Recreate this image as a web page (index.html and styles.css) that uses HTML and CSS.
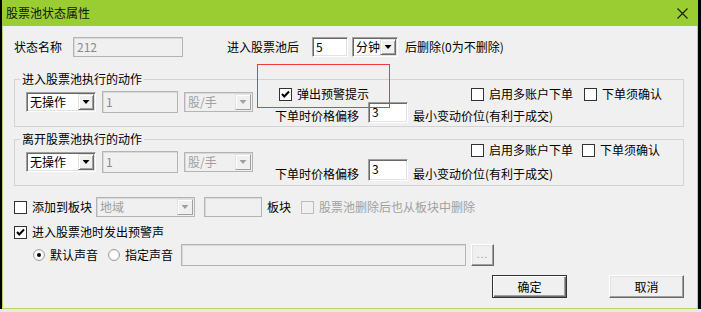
FILE: index.html
```html
<!DOCTYPE html>
<html lang="zh-CN">

<head>
    <meta charset="UTF-8">
    <title>股票池状态属性</title>
    <link rel="stylesheet" href="styles.css">
</head>

<body>
    <div class="window">
        <div class="titlebar">
            <span class="titlebar-text">股票池状态属性</span>
            <svg class="close" viewBox="0 0 11 11">
                <path d="M0.5 0.5L10.5 10.5M10.5 0.5L0.5 10.5" stroke="#1a1a1a" stroke-width="1.1" fill="none" />
            </svg>
        </div>

        <div class="body">
            <!-- name / delete time -->
            <div class="row row-name">
                <span class="label">状态名称</span>
                <span class="field is-disabled w-name">212</span>
                <span class="label ml-44">进入股票池后</span>
                <span class="field w-min">5</span>
                <span class="combo w-unit"><span class="combo-text">分钟</span><span class="combo-btn"></span></span>
                <span class="label ml-7">后删除(0为不删除)</span>
            </div>

            <!-- enter group -->
            <div class="group group-enter">
                <span class="group-title">进入股票池执行的动作</span>
                <div class="group-body">
                    <div class="group-left">
                        <span class="combo w-action"><span class="combo-text">无操作</span><span class="combo-btn"></span></span>
                        <span class="field is-disabled w-qty">1</span>
                        <span class="combo is-disabled w-per"><span class="combo-text">股/手</span><span class="combo-btn"></span></span>
                    </div>
                    <div class="group-right">
                        <div class="line1">
                            <span class="option ml-4"><span class="check is-on"><svg viewBox="0 0 11 11"><polyline points="2,5 4.3,7.5 9,2.5" /></svg></span>弹出预警提示</span>
                            <span class="option ml-102"><span class="check"></span>启用多账户下单</span>
                            <span class="option ml-11"><span class="check"></span>下单须确认</span>
                        </div>
                        <div class="line2">
                            <span class="label">下单时价格偏移</span>
                            <span class="field field-top w-tick">3</span>
                            <span class="label ml-5">最小变动价位(有利于成交)</span>
                        </div>
                    </div>
                </div>
            </div>

            <!-- leave group -->
            <div class="group group-leave">
                <span class="group-title">离开股票池执行的动作</span>
                <div class="group-body">
                    <div class="group-left">
                        <span class="combo w-action"><span class="combo-text">无操作</span><span class="combo-btn"></span></span>
                        <span class="field is-disabled w-qty">1</span>
                        <span class="combo is-disabled w-per"><span class="combo-text">股/手</span><span class="combo-btn"></span></span>
                    </div>
                    <div class="group-right">
                        <div class="line1">
                            <span class="option ml-196"><span class="check"></span>启用多账户下单</span>
                            <span class="option ml-9"><span class="check"></span>下单须确认</span>
                        </div>
                        <div class="line2">
                            <span class="label">下单时价格偏移</span>
                            <span class="field field-top w-tick">3</span>
                            <span class="label ml-5">最小变动价位(有利于成交)</span>
                        </div>
                    </div>
                </div>
            </div>

            <!-- block -->
            <div class="row row-block">
                <span class="option"><span class="check"></span>添加到板块</span>
                <span class="combo is-disabled w-block ml-4"><span class="combo-text">地域</span><span class="combo-btn"></span></span>
                <span class="field is-disabled w-blockname ml-9"></span>
                <span class="label ml-5">板块</span>
                <span class="option is-disabled ml-10"><span class="check"></span>股票池删除后也从板块中删除</span>
            </div>

            <div class="row row-sound">
                <span class="option"><span class="check is-on"><svg viewBox="0 0 11 11"><polyline points="2,5 4.3,7.5 9,2.5" /></svg></span>进入股票池时发出预警声</span>
            </div>

            <div class="row row-radio">
                <span class="option ml-19"><span class="radio is-on"></span>默认声音</span>
                <span class="option ml-10"><span class="radio"></span>指定声音</span>
                <span class="field is-disabled w-path ml-8"></span>
                <span class="btn btn-small ml-5">...</span>
            </div>

            <div class="row row-buttons">
                <span class="btn btn-default">确定</span>
                <span class="btn btn-cancel">取消</span>
            </div>
        </div>

        <div class="highlight"></div>
    </div>
</body>

</html>
```

FILE: styles.css
```css
* {
    box-sizing: border-box;
    margin: 0;
    padding: 0;
}

html,
body {
    height: 100%;
}

body {
    background-color: #e9e9e9;
    color: #000;
    font-family: "Noto Sans CJK SC", "Noto Sans", sans-serif;
    font-size: 12px;
    line-height: 14px;
}

.window {
    background-color: #f0f0f0;
    box-shadow: -2px 0 0 #000, 3px 0 0 #000;
    display: flex;
    flex-direction: column;
    height: 309px;
    margin-left: 2px;
    position: relative;
    width: 696px;
}

.titlebar {
    align-items: center;
    background-color: #9acd32;
    display: flex;
    height: 26px;
    padding: 0 10px 0 4px;
}

.titlebar-text {
    color: #111;
    flex: 1;
}

.close {
    height: 11px;
    width: 11px;
}

.body {
    border: 1px solid #b3d86a;
    border-top: 0;
    display: flex;
    flex: 1;
    flex-direction: column;
    padding: 11px 0 0 11px;
}

.row {
    align-items: center;
    display: flex;
}

.label {
    white-space: nowrap;
}

/* edit boxes */
.field {
    align-items: center;
    background-color: #fff;
    border: 1px solid;
    border-color: #a0a0a0 #fff #fff #a0a0a0;
    box-shadow: inset 1px 1px #696969, inset -1px -1px #e3e3e3;
    display: flex;
    height: 20px;
    padding: 0 3px;
}

.field.is-disabled {
    background-color: #f0f0f0;
    border-color: #b4b4b4;
    box-shadow: inset 1px 1px #dadada;
    color: #8a8a8a;
}

.field-top {
    align-items: flex-start;
    padding-top: 2px;
}

/* combo boxes */
.combo {
    background-color: #fff;
    border: 1px solid;
    border-color: #a0a0a0 #fff #fff #a0a0a0;
    box-shadow: inset 1px 1px #696969, inset -1px -1px #e3e3e3;
    display: flex;
    height: 20px;
    padding: 1px;
}

.combo-text {
    align-items: center;
    display: flex;
    flex: 1;
    padding-left: 2px;
    white-space: nowrap;
}

.combo-btn {
    align-items: center;
    background-color: #f0f0f0;
    border: 1px solid;
    border-color: #e3e3e3 #696969 #696969 #e3e3e3;
    box-shadow: inset 1px 1px #fff, inset -1px -1px #a0a0a0;
    display: flex;
    justify-content: center;
    width: 16px;
}

.combo-btn::after {
    background-color: #000;
    clip-path: polygon(0 0, 100% 0, 50% 100%);
    content: "";
    height: 4px;
    width: 7px;
}

.combo.is-disabled {
    background-color: #f0f0f0;
    border-color: #b4b4b4;
    box-shadow: inset 1px 1px #dadada;
    color: #a0a0a0;
}

.combo.is-disabled .combo-btn {
    border-color: #e3e3e3 #a0a0a0 #a0a0a0 #e3e3e3;
    box-shadow: inset 1px 1px #fff;
}

.combo.is-disabled .combo-btn::after {
    background-color: #a0a0a0;
}

/* check boxes and radios */
.option {
    align-items: center;
    display: flex;
    white-space: nowrap;
}

.check {
    background-color: #fff;
    border: 1px solid #333;
    height: 13px;
    margin-right: 5px;
    width: 13px;
}

.check svg {
    display: block;
    height: 11px;
    width: 11px;
}

.check polyline {
    fill: none;
    stroke: #000;
    stroke-width: 2;
}

.option.is-disabled {
    color: #a0a0a0;
}

.option.is-disabled .check {
    background-color: #f0f0f0;
    border-color: #bcbcbc;
}

.radio {
    align-items: center;
    background: radial-gradient(circle, #fff 40%, #e0e0e0 100%);
    border: 1px solid #a0a0a0;
    border-radius: 50%;
    display: flex;
    height: 12px;
    justify-content: center;
    margin-right: 5px;
    width: 12px;
}

.radio.is-on::after {
    background-color: #000;
    border-radius: 50%;
    content: "";
    height: 4px;
    width: 4px;
}

/* buttons */
.btn {
    align-items: center;
    background-color: #f0f0f0;
    border: 1px solid;
    border-color: #fff #696969 #696969 #fff;
    box-shadow: inset -1px -1px #a0a0a0, inset 1px 1px #e3e3e3;
    display: flex;
    height: 23px;
    justify-content: center;
    width: 75px;
}

.btn-default {
    border-color: #333;
    box-shadow: inset 1px 1px #fff, inset -1px -1px #696969, inset -2px -2px #a0a0a0;
    margin-left: 478px;
}

.btn-cancel {
    margin-left: 42px;
}

.btn-small {
    align-items: flex-end;
    color: #9a9a9a;
    font-size: 10px;
    height: 22px;
    letter-spacing: 1px;
    padding-bottom: 4px;
    width: 23px;
}

/* group boxes */
.group {
    border: 1px solid #d3d3d3;
    display: flex;
    flex-direction: column;
    width: 670px;
}

.group-enter {
    height: 48px;
    margin-top: 22px;
}

.group-leave {
    height: 47px;
    margin-top: 12px;
}

.group-title {
    align-self: flex-start;
    background-color: #f0f0f0;
    margin: -8px 0 0 5px;
    padding: 0 2px;
    white-space: nowrap;
}

.group-body {
    align-items: flex-start;
    display: flex;
    margin-top: -6px;
}

.group-left {
    align-items: center;
    display: flex;
    margin: 11px 0 0 11px;
}

.group-right {
    display: flex;
    flex: 1;
    flex-direction: column;
    margin-left: 22px;
}

.line1 {
    align-items: center;
    display: flex;
    height: 14px;
    margin-top: 7px;
}

.line2 {
    align-items: flex-end;
    display: flex;
    margin-top: 1px;
}

.line2 .field {
    height: 21px;
    margin-left: 9px;
}

.group-leave .line1 {
    margin-top: 3px;
}

.group-leave .line2 {
    margin-top: 2px;
}

.group-leave .line2 .field {
    height: 22px;
}

.group-left .w-qty {
    height: 22px;
    margin-left: 6px;
}

.group-left .w-per {
    margin-left: 6px;
}

/* lower rows */
.row-name {
    height: 20px;
}

.row-block {
    height: 20px;
    margin-top: 11px;
}

.row-sound {
    height: 20px;
    margin-top: 5px;
}

.row-radio {
    height: 22px;
    margin-top: 2px;
}

.row-buttons {
    margin-top: 9px;
}

/* widths */
.w-name { margin-left: 11px; width: 110px; }
.w-min { margin-left: 13px; width: 36px; }
.w-unit { margin-left: 4px; width: 46px; }
.w-action { width: 70px; }
.w-qty { width: 76px; }
.w-per { width: 69px; }
.w-tick { width: 40px; }
.w-block { width: 99px; }
.w-blockname { width: 58px; }
.w-path { height: 22px; width: 285px; }

.ml-4 { margin-left: 4px; }
.ml-5 { margin-left: 5px; }
.ml-7 { margin-left: 7px; }
.ml-8 { margin-left: 8px; }
.ml-9 { margin-left: 9px; }
.ml-10 { margin-left: 10px; }
.ml-11 { margin-left: 11px; }
.ml-19 { margin-left: 19px; }
.ml-44 { margin-left: 44px; }
.ml-102 { margin-left: 102px; }
.ml-196 { margin-left: 196px; }

/* red annotation box over the dialog */
.highlight {
    border: 1px solid #ee3b3b;
    height: 44px;
    left: 255px;
    pointer-events: none;
    position: absolute;
    top: 64px;
    width: 133px;
}
```
